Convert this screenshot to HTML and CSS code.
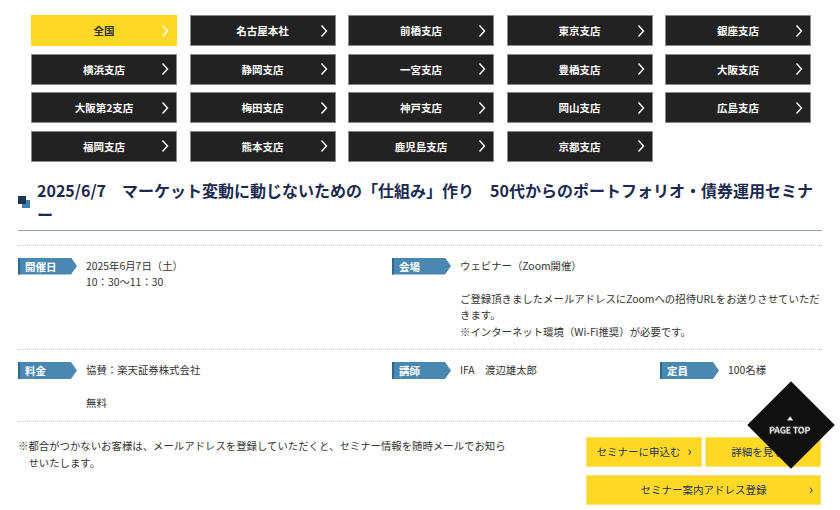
FILE: index.html
```html
<!DOCTYPE html>
<html>
<head>
    <title>セミナー情報</title>
    <link rel="stylesheet" href="styles.css">
</head>
<body>
    <div class="branches">
        <a class="branch active" href="#"><span class="name">全国</span><svg class="chev" viewBox="0 0 8 14"><path d="M1.5 1.5l5 5.5-5 5.5"/></svg></a>
        <a class="branch" href="#"><span class="name">名古屋本社</span><svg class="chev" viewBox="0 0 8 14"><path d="M1.5 1.5l5 5.5-5 5.5"/></svg></a>
        <a class="branch" href="#"><span class="name">前橋支店</span><svg class="chev" viewBox="0 0 8 14"><path d="M1.5 1.5l5 5.5-5 5.5"/></svg></a>
        <a class="branch" href="#"><span class="name">東京支店</span><svg class="chev" viewBox="0 0 8 14"><path d="M1.5 1.5l5 5.5-5 5.5"/></svg></a>
        <a class="branch" href="#"><span class="name">銀座支店</span><svg class="chev" viewBox="0 0 8 14"><path d="M1.5 1.5l5 5.5-5 5.5"/></svg></a>
        <a class="branch" href="#"><span class="name">横浜支店</span><svg class="chev" viewBox="0 0 8 14"><path d="M1.5 1.5l5 5.5-5 5.5"/></svg></a>
        <a class="branch" href="#"><span class="name">静岡支店</span><svg class="chev" viewBox="0 0 8 14"><path d="M1.5 1.5l5 5.5-5 5.5"/></svg></a>
        <a class="branch" href="#"><span class="name">一宮支店</span><svg class="chev" viewBox="0 0 8 14"><path d="M1.5 1.5l5 5.5-5 5.5"/></svg></a>
        <a class="branch" href="#"><span class="name">豊橋支店</span><svg class="chev" viewBox="0 0 8 14"><path d="M1.5 1.5l5 5.5-5 5.5"/></svg></a>
        <a class="branch" href="#"><span class="name">大阪支店</span><svg class="chev" viewBox="0 0 8 14"><path d="M1.5 1.5l5 5.5-5 5.5"/></svg></a>
        <a class="branch" href="#"><span class="name">大阪第2支店</span><svg class="chev" viewBox="0 0 8 14"><path d="M1.5 1.5l5 5.5-5 5.5"/></svg></a>
        <a class="branch" href="#"><span class="name">梅田支店</span><svg class="chev" viewBox="0 0 8 14"><path d="M1.5 1.5l5 5.5-5 5.5"/></svg></a>
        <a class="branch" href="#"><span class="name">神戸支店</span><svg class="chev" viewBox="0 0 8 14"><path d="M1.5 1.5l5 5.5-5 5.5"/></svg></a>
        <a class="branch" href="#"><span class="name">岡山支店</span><svg class="chev" viewBox="0 0 8 14"><path d="M1.5 1.5l5 5.5-5 5.5"/></svg></a>
        <a class="branch" href="#"><span class="name">広島支店</span><svg class="chev" viewBox="0 0 8 14"><path d="M1.5 1.5l5 5.5-5 5.5"/></svg></a>
        <a class="branch" href="#"><span class="name">福岡支店</span><svg class="chev" viewBox="0 0 8 14"><path d="M1.5 1.5l5 5.5-5 5.5"/></svg></a>
        <a class="branch" href="#"><span class="name">熊本支店</span><svg class="chev" viewBox="0 0 8 14"><path d="M1.5 1.5l5 5.5-5 5.5"/></svg></a>
        <a class="branch" href="#"><span class="name">鹿児島支店</span><svg class="chev" viewBox="0 0 8 14"><path d="M1.5 1.5l5 5.5-5 5.5"/></svg></a>
        <a class="branch" href="#"><span class="name">京都支店</span><svg class="chev" viewBox="0 0 8 14"><path d="M1.5 1.5l5 5.5-5 5.5"/></svg></a>
    </div>

    <div class="seminar">
        <h2 class="title">
            <span class="title-icon"><i class="sq-dark"></i><i class="sq-light"></i></span>
            <span class="title-text">2025/6/7　マーケット変動に動じないための「仕組み」作り　50代からのポートフォリオ・債券運用セミナー</span>
        </h2>

        <div class="info-row row-two">
            <div class="item">
                <span class="tag">開催日</span>
                <div class="value">2025年6月7日（土）<br>10：30～11：30</div>
            </div>
            <div class="item">
                <span class="tag">会場</span>
                <div class="value wide">ウェビナー（Zoom開催）<br><br>ご登録頂きましたメールアドレスにZoomへの招待URLをお送りさせていただきます。<br>※インターネット環境（Wi-Fi推奨）が必要です。</div>
            </div>
        </div>

        <div class="info-row row-three">
            <div class="item">
                <span class="tag">料金</span>
                <div class="value">協賛：楽天証券株式会社<br><br>無料</div>
            </div>
            <div class="item">
                <span class="tag">講師</span>
                <div class="value">IFA　渡辺雄太郎</div>
            </div>
            <div class="item">
                <span class="tag">定員</span>
                <div class="value">100名様</div>
            </div>
        </div>

        <div class="bottom">
            <p class="note">※都合がつかないお客様は、メールアドレスを登録していただくと、セミナー情報を随時メールでお知らせいたします。</p>
            <div class="actions">
                <a class="btn" href="#">セミナーに申込む<span class="arrow">›</span></a>
                <a class="btn" href="#">詳細を見る<span class="arrow">›</span></a>
                <a class="btn btn-full" href="#"><span></span><span>セミナー案内アドレス登録</span><span class="arrow">›</span></a>
            </div>
        </div>
    </div>

    <a class="page-top" href="#"><span class="page-top-inner"><i class="tri"></i>PAGE TOP</span></a>
</body>
</html>
```

FILE: styles.css
```css
body {
    margin: 0;
    padding: 0;
    background-color: #fff;
    font-family: "Noto Sans CJK JP", "Noto Sans", sans-serif;
    color: #333;
}
a {
    text-decoration: none;
}

/* branch buttons */
.branches {
    display: grid;
    grid-template-columns: repeat(5, 146px);
    column-gap: 12.5px;
    row-gap: 7.5px;
    padding: 15px 0 0 31px;
}
.branch {
    display: grid;
    grid-template-columns: 1fr auto 1fr;
    align-items: center;
    height: 31px;
    box-sizing: border-box;
    background-color: #222;
    border: 1px solid #8a8a8a;
    color: #fff;
    font-size: 10.5px;
    font-weight: bold;
}
.branch .name {
    grid-column: 2;
}
.branch .chev {
    grid-column: 3;
    justify-self: end;
    width: 8px;
    height: 14px;
    margin-right: 7px;
    fill: none;
    stroke: #fff;
    stroke-width: 1.4;
}
.branch.active {
    background-color: #fdd926;
    border-color: #fdd926;
    color: #333;
}

/* seminar block */
.seminar {
    padding: 0 18px;
}
.title {
    display: flex;
    align-items: center;
    gap: 7px;
    margin: 16px 0 0;
    padding-bottom: 4px;
    border-bottom: 1px solid #8ea2ba;
    color: #1b2a4e;
    font-size: 16px;
    line-height: 24px;
    font-weight: bold;
}
.title-icon {
    position: relative;
    flex: none;
    width: 12px;
    height: 12px;
}
.title-icon i {
    position: absolute;
    width: 8px;
    height: 8px;
}
.sq-light {
    right: 0;
    bottom: 0;
    background-color: #3e7fb1;
}
.sq-dark {
    left: 0;
    top: 0;
    background-color: #1c3658;
    z-index: 1;
}

.info-row {
    display: grid;
    margin-top: 14px;
    padding: 12px 0 9px;
    border-top: 1px dotted #c8c8c8;
    font-size: 10.4px;
    line-height: 16.5px;
}
.info-row + .info-row {
    margin-top: 0;
}
.row-two {
    grid-template-columns: 374px 1fr;
}
.row-three {
    grid-template-columns: 374px 268px 1fr;
}
.item {
    display: flex;
    align-items: flex-start;
    gap: 9px;
}
.tag {
    flex: none;
    width: 59px;
    height: 17px;
    box-sizing: border-box;
    padding-left: 5px;
    border-left: 2px solid #2c6891;
    background-color: #4a88b2;
    color: #fff;
    font-weight: bold;
    font-size: 10.5px;
    line-height: 17px;
    clip-path: polygon(0 0, calc(100% - 6px) 0, 100% 50%, calc(100% - 6px) 100%, 0 100%);
}
.value.wide {
    max-width: 362px;
}

/* bottom */
.bottom {
    display: flex;
    justify-content: space-between;
    align-items: flex-start;
    padding-top: 15px;
    border-top: 1px dotted #c8c8c8;
}
.note {
    width: 484px;
    margin: 0;
    padding-left: 1em;
    text-indent: -1em;
    font-size: 10.4px;
    line-height: 17px;
}
.actions {
    display: grid;
    grid-template-columns: 116px 116px;
    column-gap: 3px;
    row-gap: 8px;
    width: 236px;
}
.btn {
    display: flex;
    align-items: center;
    justify-content: center;
    gap: 7px;
    height: 30px;
    box-sizing: border-box;
    background-color: #fdd926;
    border: 1px solid #f6e27a;
    color: #2b3552;
    font-size: 10.5px;
}
.btn .arrow {
    font-size: 13px;
    line-height: 1;
    margin-top: -2px;
}
.btn-full {
    grid-column: 1 / 3;
    display: grid;
    grid-template-columns: 1fr auto 1fr;
}
.btn-full .arrow {
    justify-self: end;
    margin-right: 7px;
}

/* page top */
.page-top {
    position: fixed;
    left: 760px;
    top: 394px;
    width: 62px;
    height: 62px;
    background-color: #111;
    transform: rotate(45deg);
}
.page-top-inner {
    position: absolute;
    left: 50%;
    top: 50%;
    display: flex;
    flex-direction: column;
    align-items: center;
    gap: 3px;
    color: #fff;
    font-size: 9px;
    font-weight: bold;
    letter-spacing: -0.3px;
    white-space: nowrap;
    transform: translate(-50%, -40%) rotate(-45deg);
}
.tri {
    width: 0;
    height: 0;
    border-left: 3px solid transparent;
    border-right: 3px solid transparent;
    border-bottom: 4px solid #fff;
}
```
